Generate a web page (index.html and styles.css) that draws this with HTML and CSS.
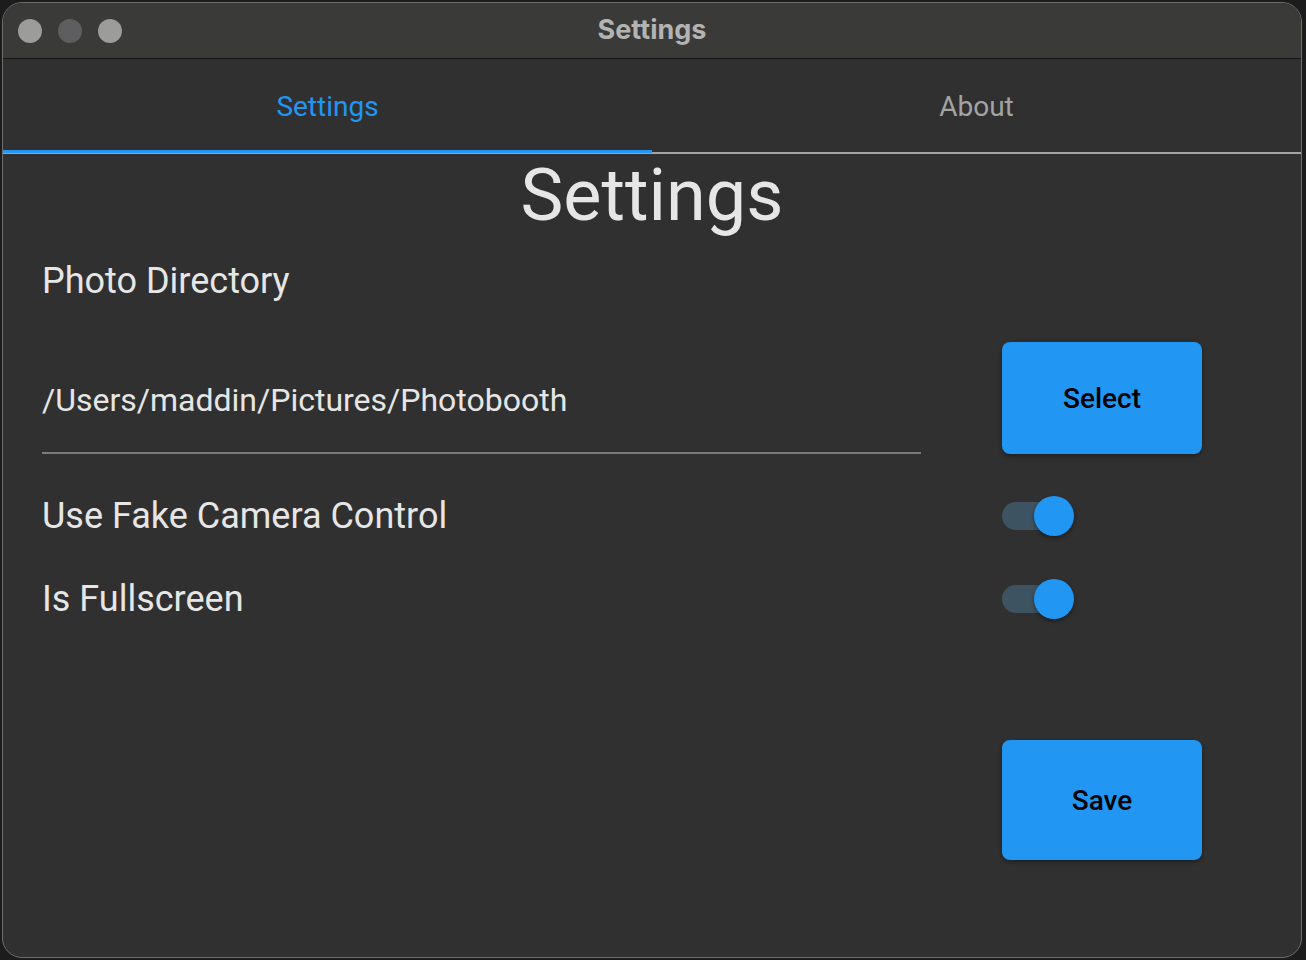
FILE: index.html
```html
<!DOCTYPE html>
<html>
<head>
<meta charset="utf-8">
<link rel="stylesheet" href="styles.css">
</head>
<body>
<div class="window">
  <div class="titlebar">
    <div class="lights">
      <span class="light"></span>
      <span class="light dim"></span>
      <span class="light"></span>
    </div>
    <div class="title">Settings</div>
  </div>
  <div class="tabs">
    <div class="tab active">Settings</div>
    <div class="tab">About</div>
  </div>
  <div class="content">
    <h1 class="heading">Settings</h1>
    <div class="section-label">Photo Directory</div>
    <div class="grid">
      <div class="field"><span class="field-text">/Users/maddin/Pictures/Photobooth</span></div>
      <div class="btn-cell"><button class="btn btn-select">Select</button></div>

      <div class="label row2">Use Fake Camera Control</div>
      <div class="switch-cell row2"><span class="switch"><span class="track"></span><span class="thumb"></span></span></div>

      <div class="label row3">Is Fullscreen</div>
      <div class="switch-cell row3"><span class="switch"><span class="track"></span><span class="thumb"></span></span></div>

      <div class="spacer"></div>
      <div class="btn-cell save-cell"><button class="btn btn-save">Save</button></div>
    </div>
  </div>
</div>
</body>
</html>
```

FILE: styles.css
```css
* { box-sizing: border-box; }
html, body { margin: 0; padding: 0; }
body {
  width: 1306px;
  height: 960px;
  background: #1c1c1c;
  overflow: hidden;
  padding: 2px 4px 2px 2px;
}
.window {
  width: 1300px;
  height: 956px;
  border: 1px solid #6e6e6e;
  border-radius: 20px;
  overflow: hidden;
  background: #303030;
  display: flex;
  flex-direction: column;
}
.titlebar {
  height: 56px;
  background: #3a3a38;
  border-bottom: 1px solid #141414;
  display: flex;
  align-items: center;
  position: relative;
  flex-shrink: 0;
}
.lights {
  display: flex;
  gap: 16px;
  padding-left: 15px;
}
.light {
  width: 24px;
  height: 24px;
  border-radius: 50%;
  background: #9c9c9c;
}
.light.dim { background: #5e5e5e; }
.title {
  position: absolute;
  left: 0;
  right: 0;
  top: 0;
  bottom: 0;
  display: flex;
  align-items: center;
  justify-content: center;
  font-family: "Inter", "Liberation Sans", sans-serif;
  font-weight: 700;
  font-size: 27px;
  color: #b3b3b3;
  padding-bottom: 3px;
}
.tabs {
  height: 95px;
  display: flex;
  border-bottom: 2px solid #a3a3a3;
  flex-shrink: 0;
}
.tab {
  flex: 1;
  display: flex;
  align-items: center;
  justify-content: center;
  font-family: "Roboto", sans-serif;
  font-size: 28px;
  color: #a3a3a3;
  padding-top: 1px;
  position: relative;
}
.tab.active { color: #2196f3; }
.tab.active::after {
  content: "";
  position: absolute;
  left: 0;
  right: 0;
  bottom: -1px;
  height: 3px;
  background: #2196f3;
}
.content {
  font-family: "Roboto", sans-serif;
  color: #e6e6e6;
  padding: 0 99px 0 39px;
}
.heading {
  margin: 0;
  text-align: center;
  font-weight: 400;
  font-size: 72px;
  line-height: 84px;
  padding-left: 60px;
}
.section-label {
  margin-top: 22px;
  font-size: 36px;
  line-height: 42px;
}
.grid {
  margin-top: 40px;
  display: grid;
  grid-template-columns: 1fr 200px;
  column-gap: 81px;
}
.field {
  height: 112px;
  border-bottom: 2px solid #7a7a7a;
  display: flex;
  align-items: center;
}
.field-text {
  font-size: 32px;
  margin-top: 5px;
}
.btn-cell { display: flex; }
.btn {
  width: 200px;
  border: none;
  border-radius: 8px;
  background: #2196f3;
  color: #000;
  font-family: "Roboto", sans-serif;
  font-weight: 500;
  font-size: 28px;
  box-shadow: 0 2px 4px rgba(0,0,0,0.35);
  padding: 0;
}
.btn-select { height: 112px; }
.btn-save { height: 120px; }
.label {
  font-size: 36px;
  height: 56px;
  display: flex;
  align-items: center;
}
.switch-cell {
  height: 56px;
  display: flex;
  align-items: center;
}
.row2 { margin-top: 34px; }
.row3 { margin-top: 27px; }
.switch {
  position: relative;
  width: 72px;
  height: 40px;
  display: block;
}
.track {
  position: absolute;
  left: 0;
  top: 6px;
  width: 66px;
  height: 28px;
  border-radius: 14px;
  background: #3e5361;
}
.thumb {
  position: absolute;
  left: 32px;
  top: 0;
  width: 40px;
  height: 40px;
  border-radius: 50%;
  background: #2196f3;
  box-shadow: 0 2px 4px rgba(0,0,0,0.4);
}
.save-cell { margin-top: 113px; }
```
